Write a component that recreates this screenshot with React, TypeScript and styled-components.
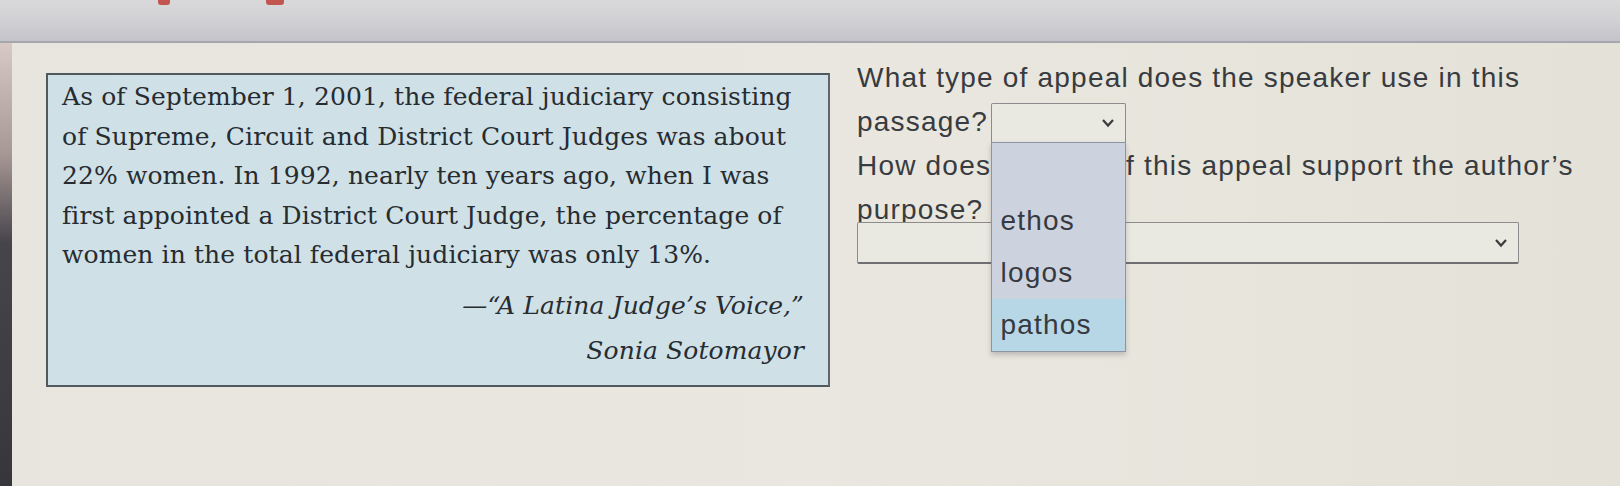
import styled, { createGlobalStyle } from "styled-components"

const GlobalStyle = createGlobalStyle`
  html, body {
    margin: 0;
    padding: 0;
    background: #e6e4db;
  }
`

const Screen = styled.div`
  width: 1620px;
  height: 486px;
  overflow: hidden;
  display: flex;
  flex-direction: column;
  background: #e6e4db;
`

const TopBar = styled.div`
  height: 41px;
  flex-shrink: 0;
  display: flex;
  align-items: flex-start;
  gap: 96px;
  padding-left: 158px;
  background: linear-gradient(180deg, #d9d8da 0%, #cfced2 60%, #c3c3c9 100%);
  border-bottom: 2px solid #a6a6ae;
`

const RedTick = styled.span<{ $w: number }>`
  display: block;
  width: ${(p) => p.$w}px;
  height: 5px;
  background: #c2554f;
  border-radius: 0 0 3px 3px;
`

const Body = styled.div`
  flex: 1;
  display: flex;
`

const Bezel = styled.div`
  width: 12px;
  flex-shrink: 0;
  background: linear-gradient(180deg, #d8c9c4 0%, #a89894 25%, #47454c 45%, #36363c 100%);
`

const Content = styled.div`
  flex: 1;
  display: flex;
  align-items: flex-start;
  padding: 13px 0 0 34px;
  background: linear-gradient(90deg, #e7e5dd 0%, #e9e7df 50%, #e4e2d8 100%);
`

const Passage = styled.div`
  width: 784px;
  height: 314px;
  margin-top: 17px;
  box-sizing: border-box;
  padding: 2px 24px 0 14px;
  background: #cfe1e7;
  border: 2px solid #4f595e;
  border-right-color: #5d676c;
  color: #272c31;
  font-family: "DejaVu Serif", "Liberation Serif", serif;
  font-size: 25px;
  letter-spacing: 0.1px;
`

const PassageText = styled.p`
  margin: 0;
  line-height: 39.5px;
  white-space: nowrap;
`

const Attribution = styled.div`
  margin-top: 8px;
  text-align: right;
  font-style: italic;
  line-height: 45px;
`

const Questions = styled.div`
  width: 730px;
  margin-left: 27px;
  color: #383b40;
  font-family: "Liberation Sans", Arial, sans-serif;
  font-size: 28px;
  letter-spacing: 1.2px;
`

const Prompt = styled.p`
  margin: 0;
  line-height: 44px;
`

const SelectBox = styled.span<{ $block?: boolean }>`
  position: relative;
  display: ${(p) => (p.$block ? "flex" : "inline-flex")};
  align-items: center;
  justify-content: flex-end;
  box-sizing: border-box;
  width: ${(p) => (p.$block ? "662px" : "135px")};
  height: ${(p) => (p.$block ? "42px" : "41px")};
  margin-left: ${(p) => (p.$block ? "0" : "3px")};
  margin-top: ${(p) => (p.$block ? "-10px" : "0")};
  padding-right: 10px;
  vertical-align: middle;
  background: #e9e8e1;
  border: 1.5px solid #8c8c8c;
  border-bottom: 2px solid #6f6f72;
  border-radius: 2px;
`

const Chevron = () => (
  <svg width="14" height="10" viewBox="0 0 14 10">
    <path d="M2 2 L7 7.5 L12 2" fill="none" stroke="#3c3c3c" strokeWidth="2.2" />
  </svg>
)

const Listbox = styled.ul`
  position: absolute;
  top: 100%;
  left: -1.5px;
  width: 135px;
  margin: 0;
  padding: 0;
  list-style: none;
  box-sizing: border-box;
  background: #cdd3de;
  border: 1.5px solid #8e95a0;
  box-shadow: 0 3px 5px rgba(60, 60, 70, 0.25);
  z-index: 2;
`

const Option = styled.li<{ $active?: boolean }>`
  height: 52px;
  line-height: 52px;
  padding-left: 9px;
  color: #363a40;
  background: ${(p) => (p.$active ? "#b7d7e7" : "transparent")};
`

const options = ["", "ethos", "logos", "pathos"]

const App: React.FC = () => {
  return (
    <Screen>
      <GlobalStyle />
      <TopBar>
        <RedTick $w={12} />
        <RedTick $w={18} />
      </TopBar>
      <Body>
        <Bezel />
        <Content>
          <Passage>
            <PassageText>
              As of September 1, 2001, the federal judiciary consisting
              <br />
              of Supreme, Circuit and District Court Judges was about
              <br />
              22% women. In 1992, nearly ten years ago, when I was
              <br />
              first appointed a District Court Judge, the percentage of
              <br />
              women in the total federal judiciary was only 13%.
            </PassageText>
            <Attribution>
              <div>—“A Latina Judge’s Voice,”</div>
              <div>Sonia Sotomayor</div>
            </Attribution>
          </Passage>
          <Questions>
            <Prompt>
              What type of appeal does the speaker use in this passage?
              <SelectBox>
                <Chevron />
                <Listbox>
                  {options.map((o, i) => (
                    <Option key={i} $active={o === "pathos"}>
                      {o}
                    </Option>
                  ))}
                </Listbox>
              </SelectBox>
            </Prompt>
            <Prompt>
              How does the use of this appeal support the author’s purpose?
            </Prompt>
            <SelectBox $block>
              <Chevron />
            </SelectBox>
          </Questions>
        </Content>
      </Body>
    </Screen>
  )
}

export default App
